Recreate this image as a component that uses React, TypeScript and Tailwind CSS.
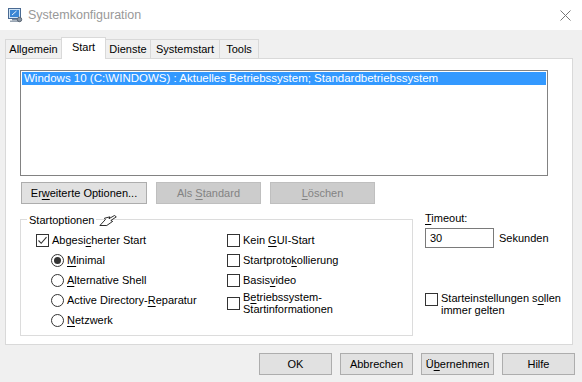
import React from "react";

const font = "font-['Liberation_Sans',Arial,sans-serif]";

function Key({ children }: { children: React.ReactNode }) {
  return <span className="underline underline-offset-2">{children}</span>;
}

function CheckBox({ checked = false }: { checked?: boolean }) {
  return (
    <span className="flex h-[13px] w-[13px] shrink-0 items-center justify-center border border-[#333333] bg-white">
      {checked && (
        <svg width="11" height="11" viewBox="0 0 11 11" fill="none">
          <path d="M1.5 5.5 L4.2 8.3 L9.5 2.2" stroke="#333333" strokeWidth="1.1" />
        </svg>
      )}
    </span>
  );
}

function Radio({ checked = false }: { checked?: boolean }) {
  return (
    <span className="flex h-[13px] w-[13px] shrink-0 items-center justify-center rounded-full border border-[#333333] bg-white">
      {checked && <span className="h-[7px] w-[7px] rounded-full bg-[#333333]" />}
    </span>
  );
}

function Button({
  children,
  disabled = false,
  className = "",
}: {
  children: React.ReactNode;
  disabled?: boolean;
  className?: string;
}) {
  return (
    <div
      className={`flex h-[22px] items-center justify-center border text-[11px] ${
        disabled
          ? "border-[#bfbfbf] bg-[#cccccc] text-[#838383]"
          : "border-[#adadad] bg-[#e1e1e1] text-black"
      } ${className}`}
    >
      <span>{children}</span>
    </div>
  );
}

const tabs = ["Allgemein", "Start", "Dienste", "Systemstart", "Tools"];
const tabWidths = ["w-[57px]", "w-[45px]", "w-[46px]", "w-[70px]", "w-[40px]"];

function AppIcon() {
  return (
    <svg width="16" height="16" viewBox="0 0 16 16">
      <rect x="1.5" y="1.5" width="12" height="10" fill="#cfe3f5" stroke="#4a6a92" />
      <rect x="3" y="3" width="9" height="7" fill="#3a86d4" />
      <path d="M5 8 L9.5 4" stroke="#e8f2fb" strokeWidth="1" />
      <rect x="5" y="12" width="6" height="1.5" fill="#7a8a9c" />
      <rect x="3" y="13.5" width="10" height="1.5" fill="#9aa6b4" />
      <circle cx="12.5" cy="12.5" r="2.2" fill="#8a96a4" stroke="#5b6673" />
    </svg>
  );
}

export default function App() {
  return (
    <div className={`h-[382px] w-[582px] overflow-hidden bg-[#f0f0f0] text-[11px] text-black ${font}`}>
      {/* title bar */}
      <div className="flex h-[30px] items-center bg-white pl-[7px] pr-[11px]">
        <AppIcon />
        <span className="ml-[5px] text-[12.5px] text-[#999999]">Systemkonfiguration</span>
        <svg className="ml-auto" width="11" height="11" viewBox="0 0 11 11">
          <path d="M0.5 0.5 L10.5 10.5 M10.5 0.5 L0.5 10.5" stroke="#777777" strokeWidth="1" />
        </svg>
      </div>

      {/* tabs */}
      <div className="px-[5px] pt-[7px]">
        <div className="flex h-[21px] items-end">
          {tabs.map((t, i) => {
            const active = t === "Start";
            return (
              <div
                key={t}
                className={`flex items-center justify-center border border-b-0 border-[#d9d9d9] ${tabWidths[i]} ${
                  i > 0 ? "-ml-px" : ""
                } ${
                  active
                    ? "relative z-10 -mb-px h-[22px] bg-white pb-[3px]"
                    : "h-[19px] bg-[#f0f0f0]"
                }`}
              >
                {t}
              </div>
            );
          })}
        </div>

        {/* panel */}
        <div className="h-[287px] w-[568px] border border-[#d9d9d9] bg-white pl-[14px] pt-[11px]">
          {/* boot entries */}
          <div className="h-[106px] w-[528px] border border-[#828282] p-px">
            <div className="h-[13px] bg-[#3399ff] pl-[2px] text-[11.5px] leading-[13px] text-white">
              Windows 10 (C:\WINDOWS) : Aktuelles Betriebssystem; Standardbetriebssystem
            </div>
          </div>

          <div className="mt-[6px] flex gap-[9px] pl-px">
            <Button className="w-[126px]">
              Er<Key>w</Key>eiterte Optionen...
            </Button>
            <Button disabled className="w-[105px]">
              Als <Key>S</Key>tandard
            </Button>
            <Button disabled className="w-[105px]">
              <Key>L</Key>öschen
            </Button>
          </div>

          <div className="mt-[15px] flex items-start">
            {/* Startoptionen group */}
            <div className="relative h-[117px] w-[393px] border border-[#dcdcdc]">
              <span className="absolute -top-[8px] left-[6px] bg-white px-[2px]">Startoptionen</span>
              <svg className="absolute -top-[6px] left-[78px]" width="20" height="13" viewBox="0 0 22 14">
                <path
                  d="M1 12.5 L7 6 L6 4.5 L12 3 L11 5 L17 1.5 L19 3 L13 7 L15 8 L8.5 12.5 Z"
                  fill="white"
                  stroke="black"
                  strokeWidth="0.9"
                  strokeLinejoin="round"
                />
              </svg>

              <div className="flex pt-[10px]">
                <div className="flex w-[206px] flex-col pl-[15px]">
                  <div className="flex h-[20px] items-center gap-[3px]">
                    <CheckBox checked />
                    <span>
                      Abgesi<Key>c</Key>herter Start
                    </span>
                  </div>
                  <div className="flex flex-col pl-[15px]">
                    <div className="flex h-[20px] items-center gap-[3px]">
                      <Radio checked />
                      <span>
                        <Key>M</Key>inimal
                      </span>
                    </div>
                    <div className="flex h-[20px] items-center gap-[3px]">
                      <Radio />
                      <span>
                        <Key>A</Key>lternative Shell
                      </span>
                    </div>
                    <div className="flex h-[20px] items-center gap-[3px]">
                      <Radio />
                      <span>
                        Active Directory-<Key>R</Key>eparatur
                      </span>
                    </div>
                    <div className="flex h-[20px] items-center gap-[3px]">
                      <Radio />
                      <span>
                        <Key>N</Key>etzwerk
                      </span>
                    </div>
                  </div>
                </div>

                <div className="flex flex-col">
                  <div className="flex h-[20px] items-center gap-[3px]">
                    <CheckBox />
                    <span>
                      Kein <Key>G</Key>UI-Start
                    </span>
                  </div>
                  <div className="flex h-[20px] items-center gap-[3px]">
                    <CheckBox />
                    <span>
                      Startproto<Key>k</Key>ollierung
                    </span>
                  </div>
                  <div className="flex h-[20px] items-center gap-[3px]">
                    <CheckBox />
                    <span>
                      Basis<Key>v</Key>ideo
                    </span>
                  </div>
                  <div className="mt-px flex items-center gap-[3px]">
                    <CheckBox />
                    <span className="leading-[12px]">
                      B<Key>e</Key>triebssystem-
                      <br />
                      Startinformationen
                    </span>
                  </div>
                </div>
              </div>
            </div>

            {/* right column */}
            <div className="-mt-[7px] ml-[12px] flex flex-col">
              <span className="leading-[13px]">
                <Key>T</Key>imeout:
              </span>
              <div className="mt-[3px] flex items-center">
                <div className="flex h-[20px] w-[69px] items-center border border-[#7a7a7a] pl-[4px]">30</div>
                <span className="ml-[5px]">Sekunden</span>
              </div>
              <div className="mt-[45px] flex items-start gap-[3px]">
                <CheckBox />
                <span className="-mt-px leading-[12px]">
                  Starteinstellungen s<Key>o</Key>llen
                  <br />
                  immer gelten
                </span>
              </div>
            </div>
          </div>
        </div>

        {/* dialog buttons */}
        <div className="mt-[8px] flex justify-end gap-[8px] pr-[2px]">
          <Button className="w-[73px]">OK</Button>
          <Button className="w-[73px]">Abbrechen</Button>
          <Button className="w-[73px]">
            Ü<Key>b</Key>ernehmen
          </Button>
          <Button className="w-[73px]">Hilfe</Button>
        </div>
      </div>
    </div>
  );
}
